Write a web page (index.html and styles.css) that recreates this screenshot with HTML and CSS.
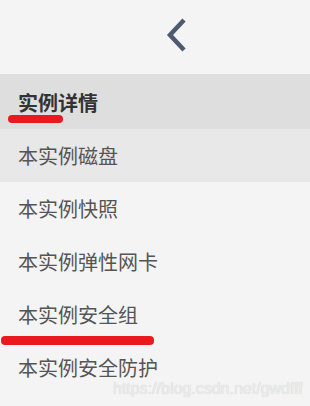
FILE: index.html
```html
<!DOCTYPE html>
<html lang="zh">
<head>
    <meta charset="UTF-8">
    <meta name="viewport" content="width=device-width, initial-scale=1.0">
    <title>实例详情</title>
    <link rel="stylesheet" href="styles.css">
</head>
<body>
    <div class="top">
        <svg class="back" width="24" height="36" viewBox="0 0 24 36">
            <polyline points="19,3 5,18 19,33" fill="none" stroke="#4e5a6f" stroke-width="4.5" />
        </svg>
    </div>

    <ul class="menu">
        <li class="menu-title">
            实例详情
            <span class="mark mark-title"></span>
        </li>
        <li class="menu-item active">本实例磁盘</li>
        <li class="menu-item">本实例快照</li>
        <li class="menu-item">本实例弹性网卡</li>
        <li class="menu-item">
            本实例安全组
            <span class="mark mark-group"></span>
        </li>
        <li class="menu-item">本实例安全防护</li>
    </ul>

    <div class="watermark">https://blog.csdn.net/gwdfff</div>
</body>
</html>
```

FILE: styles.css
```css
body {
    font-family: "Noto Sans CJK SC", "Noto Sans", sans-serif;
    background: #f4f4f4;
    color: #555;
    margin: 0;
    padding: 0;
    height: 406px;
    overflow: hidden;
    position: relative;
}

.top {
    height: 74px;
    display: flex;
    align-items: center;
    padding-left: 165px;
    box-sizing: border-box;
}

.back {
    display: block;
    margin-top: -4px;
}

.menu {
    list-style: none;
    margin: 0;
    padding: 0;
}

.menu li {
    position: relative;
    height: 53px;
    line-height: 53px;
    padding-left: 18px;
    font-size: 20px;
}

.menu-title {
    background: #dedede;
    color: #333;
    font-weight: bold;
    height: 55px !important;
    line-height: 58px !important;
}

.menu-item.active {
    background: #e8e8e8;
}

.mark {
    position: absolute;
    height: 8px;
    border-radius: 4px;
    background: #e91a1f;
}

.mark-title {
    left: 8px;
    top: 41px;
    width: 55px;
}

.mark-group {
    left: 1px;
    top: 48px;
    width: 153px;
    height: 9px;
}

.watermark {
    position: absolute;
    left: 113px;
    top: 380px;
    font-family: "Liberation Sans", Arial, sans-serif;
    font-size: 16px;
    color: #ececec;
    text-shadow: 0 0 1px #c8c8c8;
}
```
